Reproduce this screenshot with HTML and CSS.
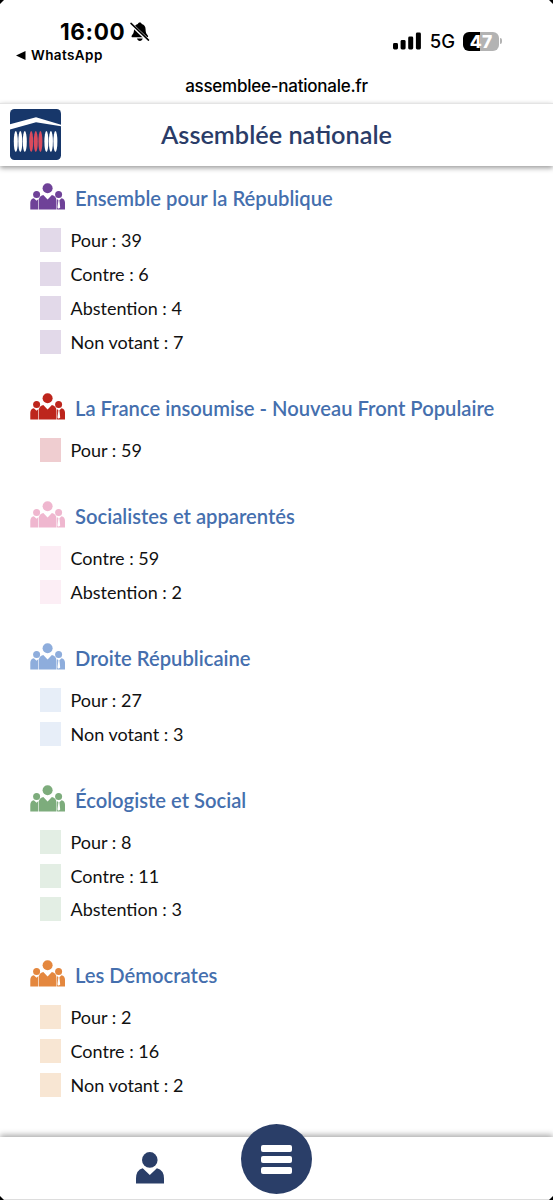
FILE: index.html
```html
<!DOCTYPE html>
<html lang="fr">
<head>
    <meta charset="UTF-8">
    <meta name="viewport" content="width=device-width, initial-scale=1.0">
    <title>Assemblée nationale</title>
    <link rel="stylesheet" href="styles.css">
</head>
<body>

    <!-- Shared icons -->
    <svg class="sprite" width="0" height="0">
        <symbol id="group" viewBox="0 0 35 27">
            <circle cx="17.6" cy="5.3" r="5"/>
            <circle cx="6.6" cy="11.4" r="3.5"/>
            <circle cx="28.6" cy="11.4" r="3.5"/>
            <path d="M.3 26.4v-6.6q0-3.800 3.500-4.600l2.800 2.600 1.900-1.900q-.4 1.200-.4 2.800v7.700z"/>
            <path d="M8.700 26.400v-8.400q0-4.900 4.600-5.900l4.300 4.400 4.300-4.400q4.600 1 4.600 5.900v8.400z"/>
            <path d="M35 26.400v-6.600q0-3.800-3.500-4.600l-2.100 2 .8 7.200-1.500 1.300-1.200-1.300.9-7.200-1.500-1.300q.2 1 .2 2.800v7.700z"/>
        </symbol>
    </svg>

    <div class="page">
        <div class="status-bar">
            <div class="status-left">
                <div class="clock">
                    <span>16:00</span>
                    <svg width="20" height="20" viewBox="0 0 20 20">
                        <path d="M9.800.5c1 0 1.800.6 2 1.500 2.600.8 3.800 2.800 3.800 5.500 0 3.800 1.300 4.600 2.200 5.900.6.900.3 1.900-.9 1.900H2.700c-1.200 0-1.500-1-.9-1.900.9-1.300 2.200-2.100 2.200-5.900 0-2.700 1.200-4.700 3.800-5.500.2-.9 1-1.500 2-1.500zM7 16.600h5.700c-.4 1.500-1.400 2.400-2.800 2.400S7.400 18.100 7 16.600z"/>
                        <path d="M.8 2l17.500 16.500" stroke="#fff" stroke-width="3.400"/>
                        <path d="M1 1.400l17.500 16.700" stroke="#000" stroke-width="1.500" stroke-linecap="round"/>
                    </svg>
                </div>
                <div class="back">
                    <svg width="10" height="9" viewBox="0 0 10 9"><path d="M0 4.500L9.500 0v9z"/></svg>
                    <span>WhatsApp</span>
                </div>
            </div>
            <div class="status-right">
                <svg width="28" height="18" viewBox="0 0 28 18">
                    <rect x="0" y="11" width="5" height="6.500" rx="1.400"/>
                    <rect x="7.600" y="8" width="5" height="9.500" rx="1.400"/>
                    <rect x="15.200" y="4.500" width="5" height="13" rx="1.400"/>
                    <rect x="22.900" y=".5" width="5" height="17" rx="1.400"/>
                </svg>
                <span class="network">5G</span>
                <span class="battery">47</span>
                <span class="battery-tip"></span>
            </div>
        </div>
        <div class="address">assemblee-nationale.fr</div>

        <header class="header">
            <svg class="logo" width="51" height="51" viewBox="0 0 51 51">
                <rect width="51" height="51" rx="4.500" fill="#17376a"/>
                <path d="M0 15.300L26 8.200l25 7.600v1.400L26 13.200 0 20.400z" fill="#fff"/>
                <g fill="#fff">
                    <ellipse cx="5.800" cy="32.600" rx="2" ry="10.500"/>
                    <ellipse cx="10.300" cy="32.600" rx="2" ry="10.500"/>
                    <ellipse cx="14.800" cy="32.600" rx="2" ry="10.500"/>
                    <ellipse cx="36.400" cy="32.600" rx="2" ry="10.500"/>
                    <ellipse cx="40.900" cy="32.600" rx="2" ry="10.500"/>
                    <ellipse cx="45.400" cy="32.600" rx="2" ry="10.500"/>
                </g>
                <g fill="#d84b5d">
                    <ellipse cx="21.200" cy="32.600" rx="2" ry="10.500"/>
                    <ellipse cx="25.800" cy="32.600" rx="2" ry="10.500"/>
                    <ellipse cx="30.400" cy="32.600" rx="2" ry="10.500"/>
                </g>
            </svg>
            <h1>Assemblée nationale</h1>
        </header>

        <main class="votes">
            <section class="party epr">
                <h2><svg class="icon"><use href="#group"/></svg>Ensemble pour la République</h2>
                <ul>
                    <li>Pour : 39</li>
                    <li>Contre : 6</li>
                    <li>Abstention : 4</li>
                    <li>Non votant : 7</li>
                </ul>
            </section>
            <section class="party lfi">
                <h2><svg class="icon"><use href="#group"/></svg>La France insoumise - Nouveau Front Populaire</h2>
                <ul>
                    <li>Pour : 59</li>
                </ul>
            </section>
            <section class="party soc">
                <h2><svg class="icon"><use href="#group"/></svg>Socialistes et apparentés</h2>
                <ul>
                    <li>Contre : 59</li>
                    <li>Abstention : 2</li>
                </ul>
            </section>
            <section class="party dr">
                <h2><svg class="icon"><use href="#group"/></svg>Droite Républicaine</h2>
                <ul>
                    <li>Pour : 27</li>
                    <li>Non votant : 3</li>
                </ul>
            </section>
            <section class="party eco">
                <h2><svg class="icon"><use href="#group"/></svg>Écologiste et Social</h2>
                <ul>
                    <li>Pour : 8</li>
                    <li>Contre : 11</li>
                    <li>Abstention : 3</li>
                </ul>
            </section>
            <section class="party dem">
                <h2><svg class="icon"><use href="#group"/></svg>Les Démocrates</h2>
                <ul>
                    <li>Pour : 2</li>
                    <li>Contre : 16</li>
                    <li>Non votant : 2</li>
                </ul>
            </section>
        </main>

        <nav class="bottom-nav">
            <svg width="28" height="32" viewBox="0 0 28 32">
                <circle cx="13.800" cy="7.900" r="7.800"/>
                <path d="M0 31.500v-5q0-8.500 6.700-10.300l7.100 6.800 7.100-6.800Q28 18 28 26.500v5z"/>
            </svg>
            <button class="menu" type="button" aria-label="Menu">
                <span></span>
                <span></span>
                <span></span>
            </button>
        </nav>

        <i class="corner top-left"></i>
        <i class="corner top-right"></i>
        <i class="corner bottom-left"></i>
        <i class="corner bottom-right"></i>
    </div>

</body>
</html>
```
FILE: styles.css
```css
* {
    box-sizing: border-box;
}
body {
    margin: 0;
    font-family: Lato, "Liberation Sans", sans-serif;
    background: #fff;
    color: #111;
}
.sprite {
    display: none;
}
.page {
    position: relative;
    display: flex;
    flex-direction: column;
    height: 1200px;
    overflow: hidden;
}

/* Phone status bar */
.status-bar {
    display: flex;
    justify-content: space-between;
    height: 69px;
    padding: 18px 51px 0 16px;
    font-family: Inter, sans-serif;
    color: #000;
}
.clock {
    display: flex;
    align-items: center;
    gap: 5px;
    height: 27px;
    padding-left: 44px;
    font-size: 22.5px;
    font-weight: 700;
    letter-spacing: 0.6px;
}
.back {
    display: flex;
    align-items: center;
    gap: 5px;
    height: 20px;
    font-size: 13.5px;
    font-weight: 600;
    letter-spacing: 0.4px;
}
.status-right {
    display: flex;
    align-items: center;
    height: 46px;
}
.network {
    margin: 0 8px 0 9px;
    font-size: 18.5px;
    font-weight: 500;
}
.battery {
    width: 36px;
    height: 19px;
    border-radius: 6px;
    background: linear-gradient(90deg, #000 47%, #b3b3b3 47%);
    color: #fff;
    font-size: 17.5px;
    font-weight: 800;
    line-height: 19px;
    text-align: center;
}
.battery-tip {
    width: 2px;
    height: 6px;
    margin-left: 1px;
    border-radius: 0 2px 2px 0;
    background: #b3b3b3;
}
.address {
    height: 34px;
    font-family: Inter, sans-serif;
    font-size: 17px;
    font-weight: 500;
    letter-spacing: -0.25px;
    line-height: 34px;
    text-align: center;
    color: #000;
}

/* Site header */
.header {
    display: grid;
    grid-template-columns: 51px 1fr 51px;
    align-items: center;
    height: 63px;
    padding: 0 10px 2px;
    border-top: 1px solid #e4e4e4;
    box-shadow: 0 2px 5px rgba(0, 0, 0, 0.4);
}
.header h1 {
    margin: 0;
    font-size: 25.3px;
    font-weight: 600;
    text-align: center;
    color: #2a3c68;
}

/* Votes by party */
.votes {
    flex: 1;
    min-height: 0;
    padding: 17.4px 30px 0;
}
.party {
    margin-bottom: 34.2px;
}
.party h2 {
    display: flex;
    align-items: center;
    gap: 10px;
    height: 30px;
    margin: 0 0 10px;
    font-size: 20.2px;
    font-weight: 600;
    white-space: nowrap;
    color: #456fae;
}
.icon {
    width: 35px;
    height: 27px;
    margin-top: -3px;
    fill: var(--party);
}
.party ul {
    margin: 0;
    padding: 0 0 0 10px;
    list-style: none;
}
.party li {
    display: flex;
    align-items: center;
    gap: 10px;
    height: 33.85px;
    font-size: 18px;
}
.party li::before {
    content: "";
    width: 20.5px;
    height: 24px;
    background: var(--tint);
}
.epr {
    --party: #6f4298;
    --tint: #e2d9e9;
}
.lfi {
    --party: #bd251c;
    --tint: #efcdd0;
}
.soc {
    --party: #efb7cf;
    --tint: #fceef5;
}
.dr {
    --party: #8eaddc;
    --tint: #e7eef8;
}
.eco {
    --party: #7dac7c;
    --tint: #e3eee4;
}
.dem {
    --party: #e4873e;
    --tint: #f8e6d3;
}

/* Bottom navigation */
.bottom-nav {
    position: relative;
    height: 63px;
    padding: 15px 0 0 136px;
    border-bottom: 1px solid #ddd;
    background: #fff;
    box-shadow: 0 -2px 6px rgba(0, 0, 0, 0.35);
    fill: #2a3e68;
}
.menu {
    position: absolute;
    top: -13px;
    left: 241px;
    display: flex;
    flex-direction: column;
    align-items: center;
    justify-content: center;
    gap: 4px;
    width: 71px;
    height: 70px;
    padding: 0;
    border: none;
    border-radius: 50%;
    background: #2a3e68;
}
.menu span {
    width: 31px;
    height: 7px;
    border-radius: 2px;
    background: #fff;
}

/* Rounded screen corners */
.corner {
    position: absolute;
    width: 4px;
    height: 4px;
}
.top-left {
    top: 0;
    left: 0;
    background: linear-gradient(135deg, #000 45%, transparent 55%);
}
.top-right {
    top: 0;
    right: 0;
    background: linear-gradient(225deg, #000 45%, transparent 55%);
}
.bottom-left {
    bottom: 0;
    left: 0;
    background: linear-gradient(45deg, #000 45%, transparent 55%);
}
.bottom-right {
    right: 0;
    bottom: 0;
    background: linear-gradient(315deg, #000 45%, transparent 55%);
}
```
